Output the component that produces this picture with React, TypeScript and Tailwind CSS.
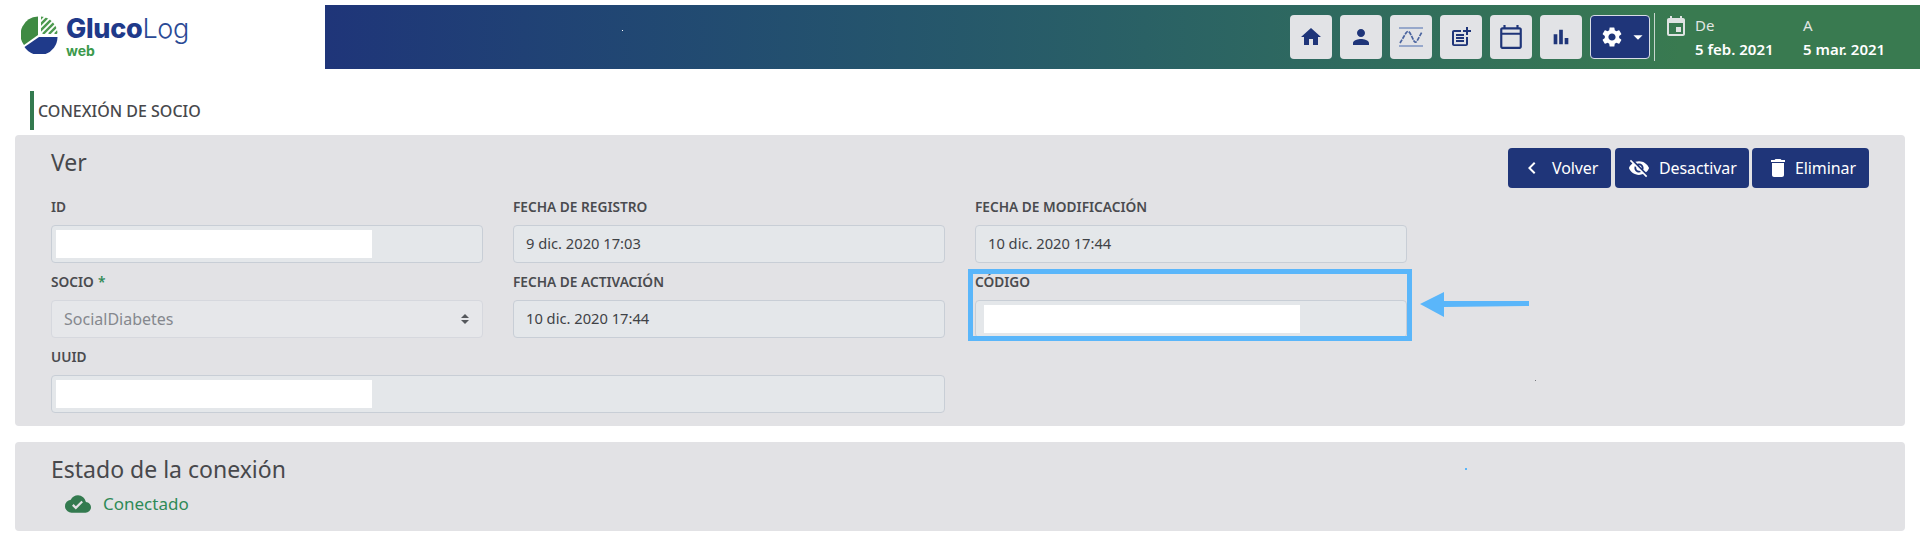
import React from "react";
import {
  MdHome,
  MdPerson,
  MdPostAdd,
  MdOutlineCalendarToday,
  MdBarChart,
  MdSettings,
  MdArrowDropDown,
  MdEvent,
  MdChevronLeft,
  MdVisibilityOff,
  MdDelete,
  MdCloudDone,
} from "react-icons/md";

const Logo = () => {
  return (
    <div className="w-[325px] shrink-0 flex items-start pl-[21px] pt-[11px]">
      <svg width="37" height="38" viewBox="0 0 37 38" className="shrink-0">
        <defs>
          <clipPath id="hatch">
            <path d="M20 0.5 A18 18 0 0 1 36.5 18 L20 18 Z" />
          </clipPath>
        </defs>
        <path d="M17 0.5 L17 0.5 A18 18 0 0 0 3 29 L17 19 Z" fill="#3f8a43" />
        <path d="M3.5 31 L18 21 L36.5 21 A18 18 0 0 1 3.5 31 Z" fill="#1f3a8a" />
        <g clipPath="url(#hatch)" stroke="#4d9a4f" strokeWidth="2.4">
          <path d="M16 6 L24 -2" />
          <path d="M16 12 L30 -2" />
          <path d="M17 17 L35 -1" />
          <path d="M22 18 L40 0" />
          <path d="M28 18 L42 4" />
          <path d="M34 18 L44 8" />
        </g>
      </svg>
      <div className="ml-2 -mt-[2px] flex flex-col font-['Inter',sans-serif] text-[#1f3a8a]">
        <div className="text-[27px] leading-[30px] tracking-[-0.3px]">
          <span className="font-extrabold">Gluco</span>
          <span className="font-light text-[#2a4a95]">Log</span>
        </div>
        <span className="text-[14px] leading-[13px] font-bold text-[#3c9a4c]">web</span>
      </div>
    </div>
  );
};

const IconButton = ({ children }: { children: React.ReactNode }) => {
  return (
    <div className="w-[42px] h-11 rounded bg-[#e2e3e6] flex items-center justify-center text-[#1f3579]">
      {children}
    </div>
  );
};

const ActionButton = ({
  label,
  icon,
  className,
}: {
  label: string;
  icon: React.ReactNode;
  className: string;
}) => {
  return (
    <div
      className={`h-10 rounded bg-[#1f3579] text-white text-[16px] tracking-[-0.1px] flex items-center ${className}`}
    >
      {icon}
      <span>{label}</span>
    </div>
  );
};

const Field = ({
  label,
  value,
  redacted,
  className,
  redactClass = "-ml-2",
}: {
  label: string;
  value?: string;
  redacted?: boolean;
  className?: string;
  redactClass?: string;
}) => {
  return (
    <div className={className}>
      <div className="h-[37px] pt-[2px] flex items-center text-[13.7px] font-semibold text-[#4a4b4f]">
        {label}
      </div>
      <div className="h-[38px] rounded border border-[#c8ced6] bg-[#e4e7ea] px-3 flex items-center text-[14.7px] text-[#3f4246]">
        {redacted ? (
          <div className={`w-[316px] h-7 bg-white ${redactClass}`} />
        ) : (
          <span className="-mt-[2px]">{value}</span>
        )}
      </div>
    </div>
  );
};

export default function App() {
  return (
    <div className="relative min-h-[551px] bg-white font-['Noto_Sans',sans-serif] overflow-hidden">
      <header className="pt-[5px] flex h-[69px]">
        <Logo />
        <div className="flex-1 h-16 bg-linear-to-r from-[#1f3579] to-[#397a50] to-[85%] flex items-start pt-[10px] pl-[965px] relative">
          <div className="flex gap-2">
            <IconButton>
              <MdHome size={24} />
            </IconButton>
            <IconButton>
              <MdPerson size={24} />
            </IconButton>
            <IconButton>
              <svg width="26" height="22" viewBox="0 0 26 22" fill="none">
                <path d="M1 2 H25 M1 20 H25" stroke="#7f95c2" strokeWidth="1.4" />
                <path
                  d="M2 17 L8 7 Q10 4 12 7 L16 15 Q17.5 17.5 19 15 L24 6"
                  stroke="#4a649f"
                  strokeWidth="1.7"
                  strokeDasharray="4 1"
                />
              </svg>
            </IconButton>
            <IconButton>
              <MdPostAdd size={24} />
            </IconButton>
            <IconButton>
              <MdOutlineCalendarToday size={26} />
            </IconButton>
            <IconButton>
              <MdBarChart size={22} />
            </IconButton>
            <div className="w-[60px] h-11 rounded border border-[#d8dce6] bg-[#1f3579] text-white flex items-center pl-[9px]">
              <MdSettings size={24} />
              <MdArrowDropDown size={22} className="ml-[3px]" />
            </div>
          </div>
          <div className="ml-[4px] -mt-[2px] w-px h-12 bg-[#c9d6cf]" />
          <MdEvent size={24} className="ml-[9px] text-[#dfe3e2] shrink-0" />
          <div className="ml-[7px] -mt-[2px] w-[108px] text-[15px] leading-6">
            <div className="text-[#e2e6e4]">De</div>
            <div className="font-semibold text-white">5 feb. 2021</div>
          </div>
          <div className="-mt-[2px] text-[15px] leading-6">
            <div className="text-[#e2e6e4]">A</div>
            <div className="font-semibold text-white">5 mar. 2021</div>
          </div>
          <span className="absolute left-[297px] top-[25px] w-px h-px bg-white" />
        </div>
      </header>

      <div className="mt-[22px] ml-[30px] h-[39px] border-l-4 border-[#337a4f] pl-1 flex items-center text-[16px] font-medium text-[#47484c]">
        CONEXIÓN DE SOCIO
      </div>

      <section className="mt-[5px] mx-[15px] rounded bg-[#e2e2e5] px-9 pt-[13px] pb-[13px]">
        <div className="flex items-start justify-between h-10">
          <h2 className="text-[23px] leading-7 text-[#47484c]">Ver</h2>
          <div className="flex gap-1">
            <ActionButton
              label="Volver"
              className="w-[103px] pl-[12px] gap-[8px]"
              icon={<MdChevronLeft size={24} />}
            />
            <ActionButton
              label="Desactivar"
              className="w-[134px] pl-[13px] gap-[9px]"
              icon={<MdVisibilityOff size={22} />}
            />
            <ActionButton
              label="Eliminar"
              className="w-[117px] -ml-px pl-[14px] gap-[5px]"
              icon={<MdDelete size={24} />}
            />
          </div>
        </div>
        <div className="grid grid-cols-[432px_432px_432px] gap-x-[30px]">
          <Field label="ID" redacted />
          <Field label="FECHA DE REGISTRO" value="9 dic. 2020 17:03" />
          <Field label="FECHA DE MODIFICACIÓN" value="10 dic. 2020 17:44" />
          <div>
            <div className="h-[37px] pt-[2px] flex items-center text-[13.7px] font-semibold text-[#4a4b4f]">
              SOCIO<span className="ml-1 text-[#2f8a57]">*</span>
            </div>
            <div className="h-[38px] rounded border border-[#d6d8de] bg-[#e6e7ea] pl-3 pr-[13px] flex items-center justify-between text-[16px] text-[#85888e]">
              SocialDiabetes
              <svg width="8" height="12" viewBox="0 0 8 12" fill="#55585c">
                <path d="M4 1 L8 5 H0 Z M4 11 L0 7 H8 Z" />
              </svg>
            </div>
          </div>
          <Field label="FECHA DE ACTIVACIÓN" value="10 dic. 2020 17:44" />
          <Field label="CÓDIGO" redacted redactClass="-ml-[4px]" />
          <Field label="UUID" redacted className="col-span-2" />
        </div>
      </section>

      <section className="mt-4 mx-[15px] h-[89px] rounded bg-[#e2e2e5] px-9 pt-[11px]">
        <h2 className="text-[23px] leading-8 text-[#47484c]">Estado de la conexión</h2>
        <div className="mt-[6px] ml-[14px] flex items-center gap-[12px] text-[17px] leading-6 text-[#2f8a57]">
          <MdCloudDone size={26} className="text-[#337a4f]" />
          Conectado
        </div>
      </section>

      {/* anotacion azul sobre la captura */}
      <div className="absolute left-[968px] top-[269px] w-[444px] h-[72px] border-[5px] border-[#5ab6fa]" />
      <svg
        className="absolute left-[1418px] top-[290px]"
        width="114"
        height="30"
        viewBox="0 0 114 30"
      >
        <path d="M2 14 L26 2 V11 L111 11 V16 L26 17 V27 Z" fill="#5ab6fa" />
      </svg>
      <span className="absolute left-[1535px] top-[380px] w-px h-px bg-[#77797d]" />
      <span className="absolute left-[1465px] top-[468px] w-[2px] h-[2px] bg-[#5ab6fa]" />
    </div>
  );
}
